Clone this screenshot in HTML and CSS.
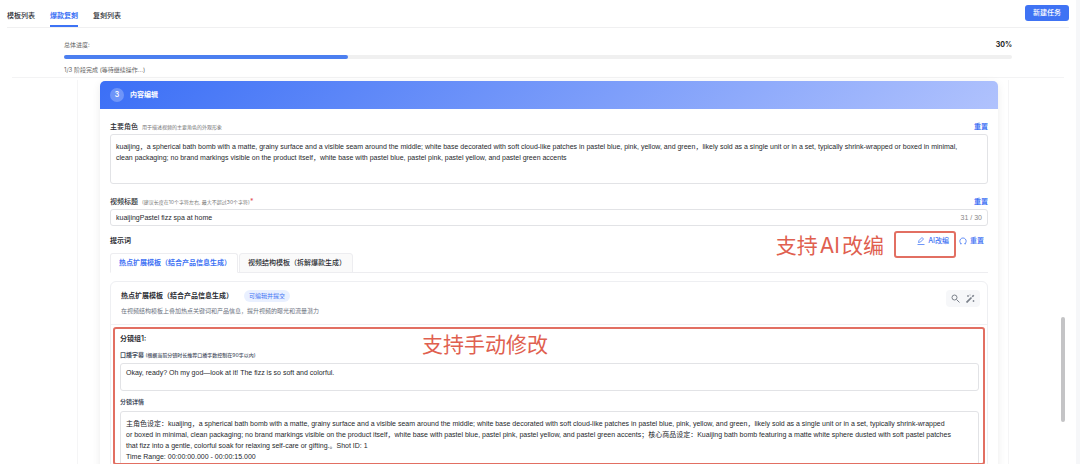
FILE: index.html
```html
<!DOCTYPE html>
<html lang="zh-CN">
<head>
    <meta charset="UTF-8">
    <meta name="viewport" content="width=device-width, initial-scale=1.0">
    <title>爆款复刻</title>
    <link rel="stylesheet" href="styles.css">
</head>
<body>
    <div class="app">
        <header class="topbar">
            <nav class="nav">
                <a href="#templates">模板列表</a>
                <a href="#remake" class="active">爆款复刻</a>
                <a href="#list">复刻列表</a>
            </nav>
            <button type="button" class="btn-new">新建任务</button>
        </header>

        <section class="progress">
            <div class="progress-head">
                <span>总体进度:</span>
                <strong>30%</strong>
            </div>
            <div class="progress-track"><div class="progress-fill" style="width: 30%"></div></div>
            <p>1/3 阶段完成 (等待继续操作...)</p>
        </section>

        <main class="content">
            <div class="card">
                <div class="card-header">
                    <span class="step">3</span>
                    <h2>内容编辑</h2>
                </div>
                <div class="card-body">
                    <div class="row">
                        <label for="role">主要角色</label>
                        <small>用于描述视频的主要角色的外观形象</small>
                        <button type="button" class="link">重置</button>
                    </div>
                    <textarea id="role" class="box role">kuaijing，a spherical bath bomb with a matte, grainy surface and a visible seam around the middle; white base decorated with soft cloud-like patches in pastel blue, pink, yellow, and green，likely sold as a single unit or in a set, typically shrink-wrapped or boxed in minimal, clean packaging; no brand markings visible on the product itself，white base with pastel blue, pastel pink, pastel yellow, and pastel green accents</textarea>

                    <div class="row">
                        <label for="title">视频标题</label>
                        <small>(建议长度在10个字符左右, 最大不超过30个字符)<i>*</i></small>
                        <button type="button" class="link">重置</button>
                    </div>
                    <div class="box title-box">
                        <input type="text" id="title" value="kuaijingPastel fizz spa at home">
                        <span>31 / 30</span>
                    </div>

                    <div class="row prompt-row">
                        <h3>提示词</h3>
                        <div class="prompt-actions">
                            <button type="button" class="link">
                                <svg width="8" height="8" viewBox="0 0 16 16" fill="none" stroke="currentColor" stroke-width="1.5"><path d="M3 11l1-4 6-6 3 3-6 6zM1 15h14"/></svg>
                                AI改编
                            </button>
                            <button type="button" class="link">
                                <svg width="8" height="8" viewBox="0 0 16 16" fill="none" stroke="currentColor" stroke-width="1.6"><path d="M4.5 13.5a6.3 6.3 0 1 1 7 0M2 13.500h3M14 13.500h-3"/></svg>
                                重置
                            </button>
                            <div class="mark mark-ai"><span>支持<b>AI</b>改编</span></div>
                        </div>
                    </div>

                    <div class="tabs">
                        <button type="button" class="active">热点扩展模板（结合产品信息生成）</button>
                        <button type="button">视频结构模板（拆解爆款生成）</button>
                    </div>

                    <section class="panel">
                        <div class="panel-header">
                            <div>
                                <div class="panel-title">
                                    <h3>热点扩展模板（结合产品信息生成）</h3>
                                    <span class="badge">可编辑并提交</span>
                                </div>
                                <p>在视频结构模板上叠加热点关键词和产品信息，提升视频的曝光和流量潜力</p>
                            </div>
                            <div class="tools">
                                <button type="button" aria-label="搜索">
                                    <svg width="9" height="9" viewBox="0 0 18 18" fill="none" stroke="currentColor" stroke-width="2"><circle cx="7" cy="7" r="5"/><path d="M11 11l6 6"/></svg>
                                </button>
                                <button type="button" aria-label="智能改写">
                                    <svg width="9" height="9" viewBox="0 0 18 18" fill="none" stroke="currentColor"><path stroke-width="3.5" d="M1 17l10-10M12.500 5.500l3-3"/><path stroke-width="1.5" d="M4 2v4M2 4h4M15 12v4M13 14h4M8 1v2"/></svg>
                                </button>
                            </div>
                        </div>
                        <div class="panel-body">
                            <h4>分镜组1:</h4>
                            <label for="subtitle">口播字幕 <small>(根据当前分镜时长推荐口播字数控制在90字以内)</small></label>
                            <textarea id="subtitle" class="box subtitle">Okay, ready? Oh my god—look at it! The fizz is so soft and colorful.</textarea>
                            <label for="detail">分镜详情</label>
                            <textarea id="detail" class="box detail">主角色设定：kuaijing，a spherical bath bomb with a matte, grainy surface and a visible seam around the middle; white base decorated with soft cloud-like patches in pastel blue, pink, yellow, and green，likely sold as a single unit or in a set, typically shrink-wrapped or boxed in minimal, clean packaging; no brand markings visible on the product itself，white base with pastel blue, pastel pink, pastel yellow, and pastel green accents；核心商品设定：Kuaijing bath bomb featuring a matte white sphere dusted with soft pastel patches that fizz into a gentle, colorful soak for relaxing self-care or gifting.。Shot ID: 1
Time Range: 00:00:00.000 - 00:00:15.000</textarea>
                            <div class="mark mark-edit"><span>支持手动修改</span></div>
                        </div>
                    </section>
                </div>
            </div>
        </main>
        <div class="scroll-thumb"></div>
    </div>
</body>
</html>
```
FILE: styles.css
```css
* {
    box-sizing: border-box;
}

body {
    margin: 0;
    background-color: #f6f7f9;
    color: #2b2d33;
    font-family: Inter, "Noto Sans CJK SC", sans-serif;
    font-size: 7px;
    line-height: 12px;
}

h2, h3, h4, p {
    margin: 0;
    font-size: 7px;
}

button, input, textarea {
    font: inherit;
    color: inherit;
    margin: 0;
    padding: 0;
    border: none;
    background: none;
}

button {
    cursor: pointer;
}

.app {
    position: relative;
    height: 100vh;
    margin-right: 4px;
    overflow: hidden;
    background-color: #fff;
}

.topbar {
    display: flex;
    justify-content: space-between;
    height: 28px;
    margin: 0 7px;
    border-bottom: 1px solid #f0f0f1;
}

.nav {
    display: flex;
    gap: 15px;
}

.nav a {
    padding-top: 10px;
    border-bottom: 2px solid transparent;
    color: #2b2d33;
    font-weight: 500;
    text-decoration: none;
}

.nav .active {
    color: #3d73f5;
    border-color: #3d73f5;
    font-weight: 700;
}

.btn-new {
    align-self: flex-start;
    margin-top: 5px;
    padding: 2px 8px;
    border-radius: 3px;
    background-color: #3f73f4;
    color: #fff;
    font-weight: 500;
}

.progress {
    margin: 0 12px;
    padding: 11px 52px 1px;
    border-bottom: 1px solid #f3f3f4;
    color: #666;
    font-size: 6px;
}

.progress-head {
    display: flex;
    justify-content: space-between;
}

.progress-head strong {
    color: #222;
    font-size: 7px;
}

.progress-track {
    height: 4px;
    margin: 4px 0 5px;
    border-radius: 2px;
    background-color: #f0f0f0;
}

.progress-fill {
    height: 100%;
    border-radius: 2px;
    background-color: #4c7ff0;
}

.progress p {
    font-size: 6px;
}

.content {
    margin: 2px 67px 0 77px;
    padding: 1px 10px 0 22px;
    border: 1px solid #f5f5f6;
    border-top: none;
}

.card {
    border-radius: 5px;
    box-shadow: 0 2px 8px rgba(0, 0, 0, 0.08);
}

.card-header {
    display: flex;
    align-items: center;
    gap: 6px;
    height: 28px;
    padding: 0 10px;
    border-radius: 5px 5px 0 0;
    background: linear-gradient(135deg, #3b6ff6, #b0c2fd);
    color: #fff;
}

.step {
    width: 14px;
    border-radius: 50%;
    background-color: rgba(255, 255, 255, 0.25);
    font-weight: 600;
    line-height: 14px;
    text-align: center;
}

.card-body {
    padding: 12px 10px;
}

.row {
    display: flex;
    align-items: center;
    gap: 4px;
    height: 12px;
    margin-bottom: 1px;
    font-weight: 500;
}

.row small {
    color: #777;
    font-size: 5px;
    font-weight: 400;
}

.row i {
    color: #e34d59;
    font-size: 7px;
    font-style: normal;
}

.row .link {
    margin-left: auto;
}

.link {
    color: #3f73f4;
    font-weight: 700;
}

.box {
    display: block;
    width: 100%;
    border: 1px solid #e2e3e6;
    border-radius: 3px;
    background-color: #fff;
    color: #26282d;
    font-family: "Liberation Sans", "Noto Sans CJK SC", sans-serif;
    line-height: 11px;
    resize: none;
    overflow: hidden;
}

.role {
    height: 50px;
    margin-bottom: 12px;
    padding: 6px 17px 6px 5px;
}

.title-box {
    display: flex;
    justify-content: space-between;
    margin-bottom: 9px;
    padding: 2px 5px;
}

.title-box input {
    flex: 1;
    outline: none;
}

.title-box span {
    color: #888;
}

.prompt-row {
    justify-content: space-between;
    margin-bottom: 6px;
}

.prompt-actions {
    position: relative;
    display: flex;
    gap: 10px;
    padding-right: 4px;
}

.prompt-actions .link {
    display: flex;
    align-items: center;
    gap: 3px;
    font-weight: 500;
}

/* red annotation frames */
.mark {
    position: absolute;
    border: 2px solid #e26f62;
    border-radius: 3px;
    color: #e0604f;
    font-size: 21px;
    font-weight: 400;
    line-height: 28px;
    white-space: nowrap;
    pointer-events: none;
}

.mark span {
    position: absolute;
}

.mark b {
    margin: 0 2px;
    font-weight: 400;
}

.mark-ai {
    top: -4px;
    right: 32px;
    width: 62px;
    height: 27px;
}

.mark-ai span {
    top: -1px;
    right: 70px;
}

.tabs {
    display: flex;
    gap: 1px;
    margin-bottom: 8px;
    border-bottom: 1px solid #ededf0;
}

.tabs button {
    height: 20px;
    margin-bottom: -1px;
    padding: 0 6px 0 8px;
    border: 1px solid #ededf0;
    border-radius: 3px 3px 0 0;
    background-color: #fafafa;
    font-weight: 500;
}

.tabs .active {
    border-bottom-color: #fff;
    background-color: #fff;
    color: #3f73f4;
    font-weight: 700;
}

.panel {
    border: 1px solid #eeeff2;
    border-radius: 6px;
}

.panel-header {
    display: flex;
    justify-content: space-between;
    align-items: flex-start;
    padding: 8px 7px 7px 10px;
    border-bottom: 1px solid #f0f1f3;
}

.panel-title {
    display: flex;
    align-items: center;
    gap: 11px;
    margin-bottom: 3px;
}

.badge {
    padding: 0 5px;
    border-radius: 6px;
    background-color: #e9f0ff;
    color: #3f73f4;
    font-size: 6px;
}

.panel-header p {
    color: #6b7280;
    font-size: 6px;
}

.tools {
    display: flex;
    gap: 6px;
    padding: 4px 5px;
    border-radius: 4px;
    background-color: #f6f7f9;
    color: #7b818b;
}

.tools button {
    height: 9px;
}

.tools svg {
    display: block;
}

.panel-body {
    position: relative;
    padding: 8px 8px 8px 9px;
}

.panel-body label {
    display: block;
    height: 12px;
    color: #4b5365;
    font-size: 6px;
    font-weight: 600;
}

.panel-body small {
    font-size: 5px;
    font-weight: 500;
}

.panel-body h4 {
    margin-bottom: 4px;
    font-weight: 600;
}

.subtitle {
    height: 28px;
    margin: 2px 0 5px;
    padding: 3px 5px;
}

.detail {
    height: 70px;
    margin-top: 3px;
    padding: 6px 26px 6px 5px;
}

.mark-edit {
    top: 2px;
    left: 2px;
    right: 2px;
    height: 138px;
}

.mark-edit span {
    top: 2px;
    left: 307px;
}

.scroll-thumb {
    position: absolute;
    top: 317px;
    right: 11px;
    width: 4px;
    height: 105px;
    border-radius: 2px;
    background-color: #c4c4c6;
}
```
